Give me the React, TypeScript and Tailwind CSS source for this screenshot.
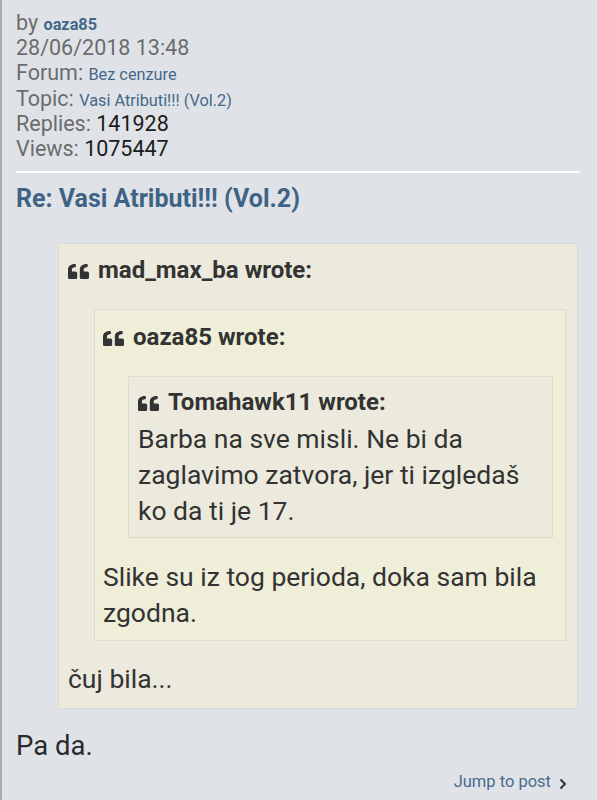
import React from "react";

const QuoteIcon = () => (
  <svg
    width="21"
    height="15"
    viewBox="0 32 512 448"
    preserveAspectRatio="none"
    className="inline-block mr-[9px] align-[-1px]"
    fill="#333"
  >
    <path d="M464 256h-80v-64c0-35.3 28.7-64 64-64h8c13.3 0 24-10.7 24-24V56c0-13.3-10.7-24-24-24h-8c-88.4 0-160 71.6-160 160v240c0 26.5 21.5 48 48 48h128c26.5 0 48-21.5 48-48V304c0-26.5-21.5-48-48-48zm-288 0H96v-64c0-35.3 28.7-64 64-64h8c13.3 0 24-10.7 24-24V56c0-13.3-10.7-24-24-24h-8C71.6 32 0 103.6 0 192v240c0 26.5 21.5 48 48 48h128c26.5 0 48-21.5 48-48V304c0-26.5-21.5-48-48-48z" />
  </svg>
);

const Cite = ({ name }: { name: string }) => (
  <div className="text-[24px] leading-[28px] font-bold text-[#333] mb-[5px] whitespace-nowrap">
    <QuoteIcon />
    {name} wrote:
  </div>
);

export default function App() {
  const font = { fontFamily: "Roboto, 'Noto Sans', Arial, sans-serif" };
  return (
    <div
      className="min-h-[800px] w-[597px] bg-[#dfe3e7] border-l-2 border-[#a8acb0] pl-[14px] pr-[17px] pt-[10px]"
      style={font}
    >
      <div className="text-[21.5px] leading-[25.2px] text-[#6c6c6c]">
        <div>
          by <span className="text-[16.3px] leading-none font-bold text-[#45678a]">oaza85</span>
        </div>
        <div>28/06/2018 13:48</div>
        <div>
          Forum: <span className="text-[16.3px] leading-none text-[#45678a]">Bez cenzure</span>
        </div>
        <div>
          Topic: <span className="text-[16.3px] leading-none text-[#45678a]">Vasi Atributi!!! (Vol.2)</span>
        </div>
        <div>
          Replies: <span className="text-[#1c1c1c]">141928</span>
        </div>
        <div>
          Views: <span className="text-[#1c1c1c]">1075447</span>
        </div>
      </div>

      <div className="mt-[10px] h-[2px] bg-white" />

      <div className="mt-[11px] text-[25px] leading-[30px] font-bold text-[#3f6385] whitespace-nowrap">
        Re: Vasi Atributi!!! (Vol.2)
      </div>

      <div className="mt-[29px] ml-[42px] mr-[2px] bg-[#ebeadd] border border-[#dbdbce] pl-[9px] pr-[10px] pt-[12px] pb-[11px] text-[#333]">
        <Cite name="mad_max_ba" />
        <div className="mt-[25px] ml-[26px] mr-px bg-[#efeed9] border border-[#dbdbce] pl-[8px] pr-[10px] pt-[13px] pb-[9px]">
          <Cite name="oaza85" />
          <div className="mt-[25px] ml-[25px] mr-[2px] bg-[#ebeadd] border border-[#dbdbce] pl-[9px] pr-[10px] pt-[11px] pb-[8px]">
            <Cite name="Tomahawk11" />
            <div className="text-[26.5px] leading-[36px]">
              Barba na sve misli. Ne bi da zaglavimo zatvora, jer ti izgledaš ko da ti je 17.
            </div>
          </div>
          <div className="mt-[21px] text-[26.5px] leading-[36px]">
            Slike su iz tog perioda, doka sam bila zgodna.
          </div>
        </div>
        <div className="mt-[20px] text-[26.5px] leading-[36px]">čuj bila...</div>
      </div>

      <div className="mt-[19px] text-[27.5px] leading-[36px] text-[#2a2a2a]">Pa da.</div>

      <div className="mt-[6px] flex justify-end items-center pr-[13px] text-[16.5px] leading-[24px] text-[#4a6a8c]">
        <span>Jump to post</span>
        <svg width="8" height="14" viewBox="0 0 8 14" className="ml-[8px] mt-[3px]">
          <path d="M1.5 2.5L6 7L1.5 11.5" stroke="#333" strokeWidth="2" fill="none" />
        </svg>
      </div>
    </div>
  );
}
